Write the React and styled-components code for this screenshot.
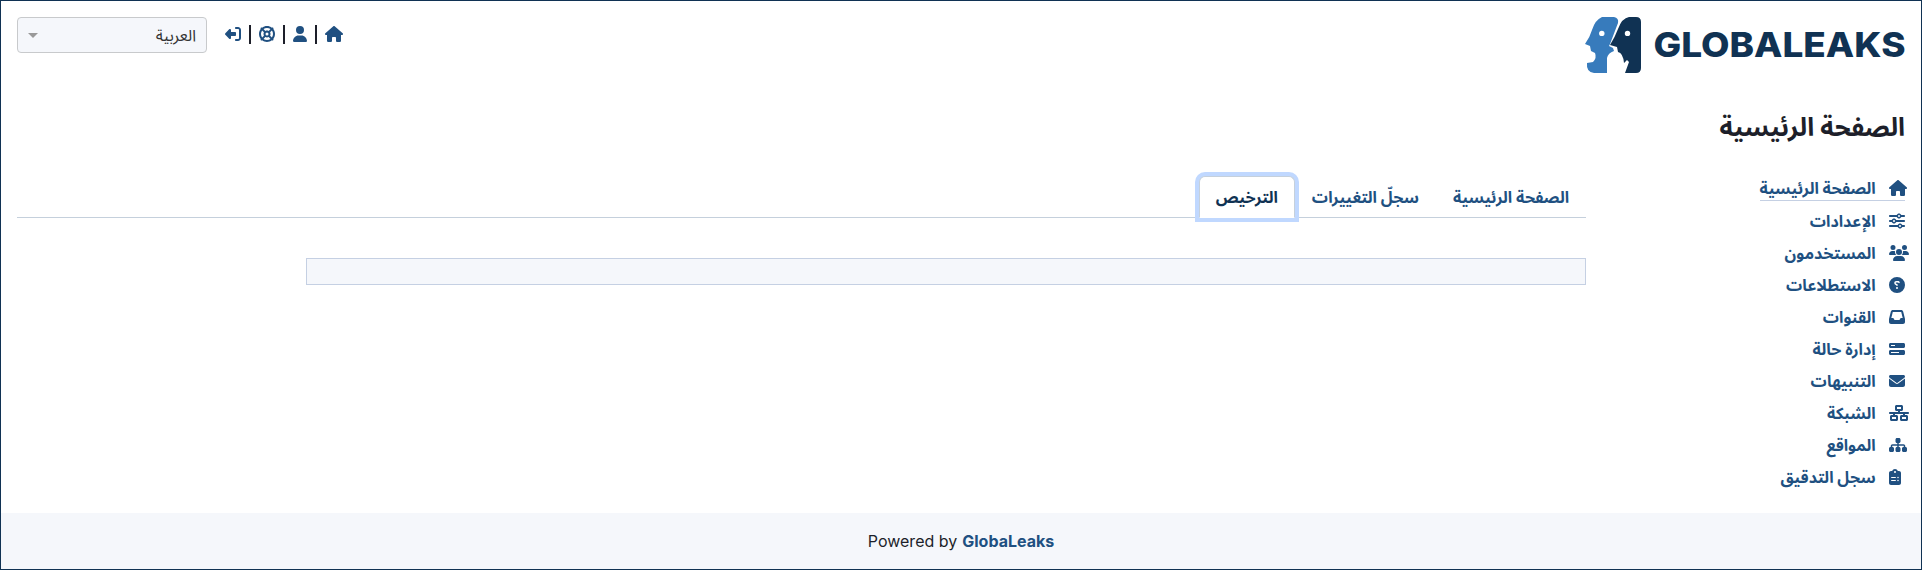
import React from "react";
import styled, { createGlobalStyle } from "styled-components";
import {
  FaHouse, FaUser, FaLifeRing, FaRightFromBracket, FaSliders, FaUsers,
  FaCircleQuestion, FaInbox, FaBarsProgress, FaEnvelope, FaNetworkWired, FaSitemap, FaClipboardList,
} from "react-icons/fa6";

const Global = createGlobalStyle`
  *, *::before, *::after { box-sizing: border-box; }
  body {
    margin: 0;
    background: #fff;
    color: #1d1f2a;
    font: 400 16px/24px Inter, "Noto Sans Arabic", "Noto Sans", "DejaVu Sans", sans-serif;
  }
`;

const Page = styled.div`
  display: flex;
  flex-direction: column;
  height: 570px;
  border: 1px solid #103253;
  overflow: hidden;
`;

const Header = styled.header`
  display: flex;
  justify-content: space-between;
  align-items: flex-start;
  height: 84px;
  padding: 16px 16px 0;
`;

const Logo = styled.svg`
  display: block;
  width: 320px;
  height: 56px;
`;

const Tools = styled.div`
  display: flex;
`;

const ToolLinks = styled.nav`
  display: flex;
  align-items: center;
  height: 34px;
  margin-left: 18px;
  color: #205081;
`;

const ToolLink = styled.a`
  display: flex;
  svg {
    display: block;
    width: ${(p) => p.$width}px;
    height: 16px;
    transform: scaleX(-1);
  }
`;

const Divider = styled.span`
  width: 2px;
  height: 19px;
  margin: 0 8px;
  background: #1d1f2a;
`;

const LanguageSelect = styled.div`
  display: flex;
  align-items: center;
  justify-content: space-between;
  width: 190px;
  height: 36px;
  padding: 0 10px;
  border: 1px solid #c8cacc;
  border-radius: 4px;
  background: #f5f7fb;
  color: #333;
`;

const Caret = styled.span`
  border: 5px solid transparent;
  border-top-color: #999;
  border-bottom-width: 0;
`;

const Title = styled.h1`
  margin: 22px 16px 0;
  font-size: 25.6px;
  line-height: 40px;
  font-weight: 700;
`;

const Body = styled.div`
  display: flex;
  flex: 1;
  padding: 0 16px;
`;

const Sidebar = styled.ul`
  width: 319px;
  margin: 0;
  padding: 28px 0 0;
  list-style: none;
`;

const SideItem = styled.li`
  display: flex;
  height: 32px;
  &:first-child { height: 33px; }
`;

const SideLink = styled.a`
  display: flex;
  align-items: center;
  gap: 13.4px;
  height: 26px;
  color: #205081;
  font-weight: 700;
  border-bottom: 1px solid ${(p) => (p.$active ? "#c5d0e3" : "transparent")};
`;

const IconBox = styled.span`
  display: flex;
  direction: ltr;
  width: 16px;
  svg {
    flex: none;
    width: ${(p) => p.$width}px;
    height: 16px;
    transform: scaleX(-1);
  }
`;

const Content = styled.main`
  flex: 1;
`;

const Tabs = styled.div`
  display: flex;
  height: 42px;
  margin-top: 29px;
  border-bottom: 1px solid #c5d0dc;
`;

const Tab = styled.a`
  height: 42px;
  padding: 8px 16px;
  border: 1px solid ${(p) => (p.$active ? "#c5d0dc" : "transparent")};
  border-bottom-color: ${(p) => (p.$active ? "#fff" : "transparent")};
  border-radius: 6px 6px 0 0;
  background: ${(p) => (p.$active ? "#fff" : "transparent")};
  box-shadow: ${(p) => (p.$active ? "0 0 0 4px #c0d8ff" : "none")};
  color: ${(p) => (p.$active ? "#103253" : "#205081")};
  font-weight: 700;
`;

const LicenseBox = styled.pre`
  width: 1280px;
  height: 27px;
  margin: 40px 0 0;
  border: 1px solid #c5d0e3;
  background: #f5f7fb;
`;

const Footer = styled.footer`
  direction: ltr;
  display: flex;
  justify-content: center;
  align-items: center;
  gap: 5px;
  height: 56px;
  background: #f5f7fb;
  a { color: #205081; font-weight: 700; }
`;

const menu = [
  ["الصفحة الرئيسية", FaHouse, 18],
  ["الإعدادات", FaSliders, 16],
  ["المستخدمون", FaUsers, 20],
  ["الاستطلاعات", FaCircleQuestion, 16],
  ["القنوات", FaInbox, 16],
  ["إدارة حالة", FaBarsProgress, 16],
  ["التنبيهات", FaEnvelope, 16],
  ["الشبكة", FaNetworkWired, 20],
  ["المواقع", FaSitemap, 18],
  ["سجل التدقيق", FaClipboardList, 12],
];

const tabs = ["الصفحة الرئيسية", "سجلّ التغييرات", "الترخيص"];

function BrandLogo() {
  return (
    <Logo viewBox="0 0 320 56" direction="ltr" role="img" aria-label="GlobaLeaks">
      <path fill="#377bbc" d="M17 0H29Q34 1 33 6L25 27 24 29 28 31 29 34Q23 36 22 41V56H9Q1 55 2 46L8 45Q12 41 10 36L6 34 5 29 0 27Q5 20 7 13Q10 3 17 0Z" />
      <path fill="#103253" d="M44 0H51Q56 0 56 5V51Q56 56 51 56H40L44 45 42 43 39 46Q38 36 33 35L32 30 25 28Q30 20 33 12Q37 1 44 0Z" />
      <circle cx="16.8" cy="16.4" r="2.7" fill="#fff" />
      <circle cx="42.5" cy="16.4" r="2.7" fill="#fff" />
      <text x="68.5" y="40" textLength="252" lengthAdjust="spacingAndGlyphs" fill="#103253" fontFamily="Inter, sans-serif" fontWeight="800" fontSize="34">GLOBALEAKS</text>
    </Logo>
  );
}

export default function App() {
  return (
    <Page dir="rtl">
      <Global />
      <Header>
        <BrandLogo />
        <Tools>
          <ToolLinks>
            <ToolLink $width={18}><FaHouse /></ToolLink>
            <Divider />
            <ToolLink $width={14}><FaUser /></ToolLink>
            <Divider />
            <ToolLink $width={16}><FaLifeRing /></ToolLink>
            <Divider />
            <ToolLink $width={16}><FaRightFromBracket /></ToolLink>
          </ToolLinks>
          <LanguageSelect>العربية<Caret /></LanguageSelect>
        </Tools>
      </Header>
      <Title>الصفحة الرئيسية</Title>
      <Body>
        <Sidebar>
          {menu.map(([label, Icon, width], i) => (
            <SideItem key={label}>
              <SideLink $active={i === 0}>
                <IconBox $width={width}><Icon /></IconBox>
                {label}
              </SideLink>
            </SideItem>
          ))}
        </Sidebar>
        <Content>
          <Tabs>
            {tabs.map((label, i) => <Tab key={label} $active={i === 2}>{label}</Tab>)}
          </Tabs>
          <LicenseBox />
        </Content>
      </Body>
      <Footer>Powered by <a>GlobaLeaks</a></Footer>
    </Page>
  );
}
